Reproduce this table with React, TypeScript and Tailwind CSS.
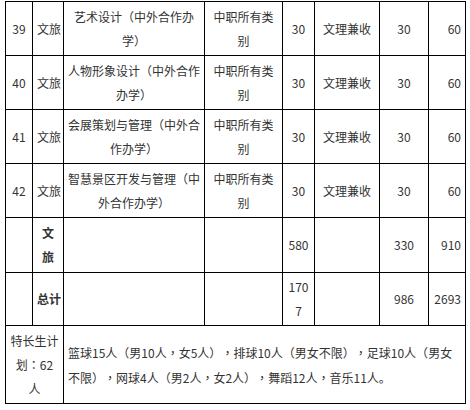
const rows = [
  { no: '39', major: ['艺术设计（中外合作办', '学）'] },
  { no: '40', major: ['人物形象设计（中外合作', '办学）'] },
  { no: '41', major: ['会展策划与管理（中外合', '作办学）'] },
  { no: '42', major: ['智慧景区开发与管理（中', '外合作办学）'] },
];

const cell = 'border border-black px-[4px] align-middle whitespace-nowrap overflow-hidden';

// full-width punctuation sits centred in its box, like the source font
function Punct({ text }: { text: string }) {
  const parts = text.split(/([（），：。])/);
  return (
    <>
      {parts.map((p, i) =>
        /^[（），：。]$/.test(p) ? (
          <span
            key={i}
            className={p === '。' ? '' : 'font-["Noto_Sans_CJK_TC",sans-serif]'}
          >
            {p}
          </span>
        ) : (
          p
        )
      )}
    </>
  );
}

function Lines({ lines }: { lines: string[] }) {
  return (
    <>
      {lines.map((line, i) => (
        <span key={i} className="block">
          <Punct text={line} />
        </span>
      ))}
    </>
  );
}

export default function App() {
  return (
    <div className="min-h-[410px] bg-white pt-px">
      <table
        className="ml-[5px] w-[460px] table-fixed border-collapse text-[12px] leading-[24px] text-[#333] [text-spacing-trim:space-all]"
        style={{ fontFamily: '"Noto Sans CJK SC", "Noto Sans", sans-serif' }}
      >
        <colgroup>
          <col className="w-[27px]" />
          <col className="w-[31px]" />
          <col className="w-[141px]" />
          <col className="w-[78px]" />
          <col className="w-[32px]" />
          <col className="w-[65px]" />
          <col className="w-[49px]" />
          <col className="w-[37px]" />
        </colgroup>
        <tbody>
          {rows.map((r) => (
            <tr key={r.no} className="h-[54px]">
              <td className={`${cell} text-center`}>{r.no}</td>
              <td className={`${cell} px-0 text-center`}>文旅</td>
              <td className={`${cell} text-center`}>
                <Lines lines={r.major} />
              </td>
              <td className={`${cell} text-center`}>
                <Lines lines={['中职所有类', '别']} />
              </td>
              <td className={`${cell} text-center`}>30</td>
              <td className={`${cell} text-center`}>文理兼收</td>
              <td className={`${cell} text-center`}>30</td>
              <td className={`${cell} text-right`}>60</td>
            </tr>
          ))}
          <tr className="h-[55px]">
            <td className={cell}></td>
            <td className={`${cell} px-0 text-center font-bold`}>
              <Lines lines={['文', '旅']} />
            </td>
            <td className={cell}></td>
            <td className={cell}></td>
            <td className={`${cell} text-center`}>580</td>
            <td className={cell}></td>
            <td className={`${cell} text-center`}>330</td>
            <td className={`${cell} text-right`}>910</td>
          </tr>
          <tr className="h-[53px]">
            <td className={cell}></td>
            <td className={`${cell} px-0 text-center font-bold`}>总计</td>
            <td className={cell}></td>
            <td className={cell}></td>
            <td className={`${cell} text-center`}>
              <Lines lines={['170', '7']} />
            </td>
            <td className={cell}></td>
            <td className={`${cell} text-center`}>986</td>
            <td className={`${cell} px-[2px] text-right`}>2693</td>
          </tr>
          <tr className="h-[78px]">
            <td colSpan={2} className={`${cell} px-0 text-center`}>
              <Lines lines={['特长生计', '划：62', '人']} />
            </td>
            <td colSpan={6} className={`${cell} text-left leading-[25px]`}>
              <Lines
                lines={[
                  '篮球15人（男10人，女5人），排球10人（男女不限），足球10人（男女',
                  '不限），网球4人（男2人，女2人），舞蹈12人，音乐11人。',
                ]}
              />
            </td>
          </tr>
        </tbody>
      </table>
    </div>
  );
}
